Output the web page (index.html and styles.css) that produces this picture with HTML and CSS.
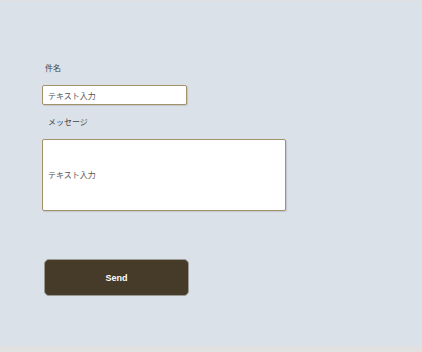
FILE: index.html
```html
<!DOCTYPE html>
<html lang="ja">
<head>
    <meta charset="UTF-8">
    <title>お問い合わせ</title>
<link rel="stylesheet" href="styles.css">
</head>
<body>
    <div class="panel">
        <form class="contact-form">
            <label class="field-label" for="subject">件名</label>
            <input class="text-input" id="subject" type="text" placeholder="テキスト入力">
            <label class="field-label field-label-msg" for="message">メッセージ</label>
            <textarea class="text-area" id="message" placeholder="テキスト入力"></textarea>
            <button class="send-btn" type="button">Send</button>
        </form>
    </div>
</body>
</html>
```

FILE: styles.css
```css
* {
    box-sizing: border-box;
}

body {
    margin: 0;
    background-color: #e1e1e1;
    font-family: "Noto Sans CJK JP", "Noto Sans", sans-serif;
}

.panel {
    margin-top: 1px;
    height: 345px;
    background-color: #dae1e8;
    padding: 61px 0 0 42px;
}

.contact-form {
    display: flex;
    flex-direction: column;
    align-items: flex-start;
}

.field-label {
    font-size: 8px;
    line-height: 12px;
    color: #444;
    padding-left: 3px;
}

.field-label-msg {
    padding-left: 6px;
}

.text-input,
.text-area {
    font-family: inherit;
    font-size: 8px;
    line-height: 12px;
    color: #444;
    background-color: #fff;
    border: 1px solid #a3916c;
    border-radius: 2px;
    box-shadow: 1px 1px 1px rgba(0,0,0,0.12);
    outline: none;
    margin: 0;
}

.text-input::placeholder,
.text-area::placeholder {
    color: #555;
    opacity: 1;
}

.text-input {
    width: 145px;
    height: 20px;
    padding: 0 5px;
    margin-top: 11px;
    margin-bottom: 11px;
}

.text-area {
    width: 244px;
    height: 72px;
    padding: 29px 5px 0;
    margin-top: 11px;
    resize: none;
    overflow: hidden;
}

.send-btn {
    margin-top: 48px;
    margin-left: 2px;
    width: 145px;
    height: 37px;
    background-color: #463a28;
    color: #fff;
    border: 1px solid #9a9a94;
    border-radius: 5px;
    font-family: "Liberation Sans", Arial, sans-serif;
    font-weight: bold;
    font-size: 9px;
    cursor: pointer;
}
```
